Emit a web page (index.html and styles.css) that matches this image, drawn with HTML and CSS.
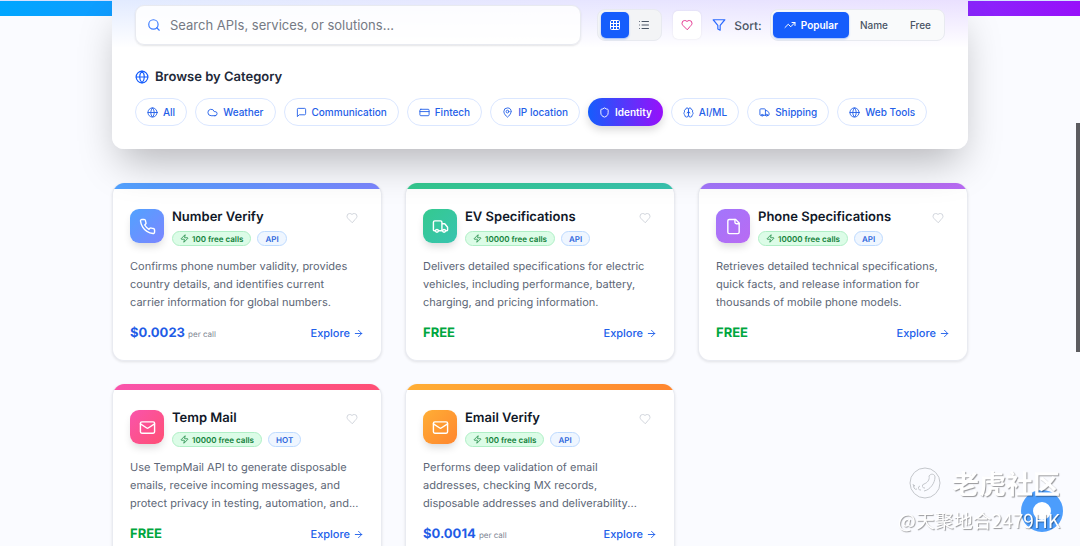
FILE: index.html
```html
<!DOCTYPE html>
<html lang="en">
<head>
    <meta charset="UTF-8">
    <meta name="viewport" content="width=device-width, initial-scale=1.0">
    <title>API Marketplace</title>
    <link rel="stylesheet" href="styles.css">
</head>
<body>
    <!-- Shared icons -->
    <svg class="sprite" aria-hidden="true">
        <symbol id="globe" viewBox="0 0 24 24"><circle cx="12" cy="12" r="10"/><path d="M12 2a14.5 14.5 0 0 0 0 20 14.5 14.5 0 0 0 0-20M2 12h20"/></symbol>
        <symbol id="search" viewBox="0 0 24 24"><circle cx="11" cy="11" r="8"/><path d="m21 21-4.3-4.3"/></symbol>
        <symbol id="grid" viewBox="0 0 24 24"><rect x="3" y="3" width="18" height="18" rx="2"/><path d="M3 9h18M3 15h18M9 3v18M15 3v18"/></symbol>
        <symbol id="list" viewBox="0 0 24 24"><path d="M3 5h.01M3 12h.01M3 19h.01M8 5h13M8 12h13M8 19h13"/></symbol>
        <symbol id="heart" viewBox="0 0 24 24"><path d="M19 14c1.49-1.46 3-3.21 3-5.5A5.5 5.5 0 0 0 16.500 3c-1.760 0-3 .5-4.500 2-1.500-1.500-2.740-2-4.500-2A5.500 5.500 0 0 0 2 8.500c0 2.300 1.500 4.050 3 5.500l7 7Z"/></symbol>
        <symbol id="filter" viewBox="0 0 24 24"><path d="M22 3H2l8 9.460V19l4 2v-8.540z"/></symbol>
        <symbol id="trending" viewBox="0 0 24 24"><path d="m22 7-8.500 8.500-5-5L2 17"/><path d="M16 7h6v6"/></symbol>
        <symbol id="cloud" viewBox="0 0 24 24"><path d="M17.500 19H9a7 7 0 1 1 6.710-9h1.790a4.500 4.500 0 1 1 0 9Z"/></symbol>
        <symbol id="message" viewBox="0 0 24 24"><path d="M21 15a2 2 0 0 1-2 2H7l-4 4V5a2 2 0 0 1 2-2h14a2 2 0 0 1 2 2z"/></symbol>
        <symbol id="credit" viewBox="0 0 24 24"><rect x="2" y="5" width="20" height="14" rx="2"/><path d="M2 10h20"/></symbol>
        <symbol id="pin" viewBox="0 0 24 24"><path d="M20 10c0 5-5.540 10.200-7.400 11.800a1 1 0 0 1-1.200 0C9.540 20.200 4 15 4 10a8 8 0 0 1 16 0"/><circle cx="12" cy="10" r="3"/></symbol>
        <symbol id="shield" viewBox="0 0 24 24"><path d="M20 13c0 5-3.500 7.500-7.660 8.950a1 1 0 0 1-.67-.01C7.500 20.500 4 18 4 13V6a1 1 0 0 1 1-1c2 0 4.500-1.200 6.240-2.720a1.170 1.170 0 0 1 1.520 0C14.510 3.810 17 5 19 5a1 1 0 0 1 1 1z"/></symbol>
        <symbol id="brain" viewBox="0 0 24 24"><path d="M12 5a3 3 0 1 0-5.997.125 4 4 0 0 0-2.526 5.770 4 4 0 0 0 .556 6.588A4 4 0 1 0 12 18Z"/><path d="M12 5a3 3 0 1 1 5.997.125 4 4 0 0 1 2.526 5.770 4 4 0 0 1-.556 6.588A4 4 0 1 1 12 18Z"/><path d="M15 13a4.500 4.500 0 0 1-3-4 4.500 4.500 0 0 1-3 4"/></symbol>
        <symbol id="truck" viewBox="0 0 24 24"><path d="M14 18V6a2 2 0 0 0-2-2H4a2 2 0 0 0-2 2v11a1 1 0 0 0 1 1h2M15 18H9M19 18h2a1 1 0 0 0 1-1v-3.650a1 1 0 0 0-.22-.624l-3.480-4.350A1 1 0 0 0 17.520 8H14"/><circle cx="17" cy="18" r="2"/><circle cx="7" cy="18" r="2"/></symbol>
        <symbol id="phone" viewBox="0 0 24 24"><path d="M22 16.920v3a2 2 0 0 1-2.180 2 19.790 19.790 0 0 1-8.630-3.070 19.500 19.500 0 0 1-6-6 19.790 19.790 0 0 1-3.070-8.670A2 2 0 0 1 4.110 2h3a2 2 0 0 1 2 1.720 12.840 12.840 0 0 0 .7 2.810 2 2 0 0 1-.45 2.110L8.090 9.910a16 16 0 0 0 6 6l1.270-1.270a2 2 0 0 1 2.110-.45 12.840 12.840 0 0 0 2.810.7A2 2 0 0 1 22 16.920z"/></symbol>
        <symbol id="file" viewBox="0 0 24 24"><path d="M15 2H6a2 2 0 0 0-2 2v16a2 2 0 0 0 2 2h12a2 2 0 0 0 2-2V7Z"/><path d="M14 2v4a2 2 0 0 0 2 2h4"/></symbol>
        <symbol id="mail" viewBox="0 0 24 24"><rect x="2" y="4" width="20" height="16" rx="2"/><path d="m22 7-8.970 5.700a1.940 1.940 0 0 1-2.060 0L2 7"/></symbol>
        <symbol id="zap" viewBox="0 0 24 24"><path d="M4 14a1 1 0 0 1-.78-1.630l9.900-10.200a.5.5 0 0 1 .86.460l-1.920 6.020A1 1 0 0 0 13 10h7a1 1 0 0 1 .78 1.630l-9.900 10.200a.5.5 0 0 1-.86-.460l1.920-6.020A1 1 0 0 0 11 14z"/></symbol>
        <symbol id="arrow" viewBox="0 0 24 24"><path d="M5 12h14M12 5l7 7-7 7"/></symbol>
    </svg>

    <header class="hero"></header>

    <main class="container">
        <!-- Search and filters -->
        <section class="panel">
            <div class="toolbar">
                <label class="search">
                    <svg class="icon"><use href="#search"/></svg>
                    <input type="text" placeholder="Search APIs, services, or solutions..." aria-label="Search APIs">
                </label>
                <div class="view-toggle">
                    <button class="active" aria-label="Grid view"><svg class="icon"><use href="#grid"/></svg></button>
                    <button aria-label="List view"><svg class="icon"><use href="#list"/></svg></button>
                </div>
                <button class="favorites" aria-label="Favorites"><svg class="icon"><use href="#heart"/></svg></button>
                <span class="sort-label"><svg class="icon"><use href="#filter"/></svg>Sort:</span>
                <div class="sort">
                    <button class="active"><svg class="icon"><use href="#trending"/></svg>Popular</button>
                    <button>Name</button>
                    <button>Free</button>
                </div>
            </div>

            <h2><svg class="icon"><use href="#globe"/></svg>Browse by Category</h2>
            <div class="categories">
                <button><svg class="icon"><use href="#globe"/></svg>All</button>
                <button><svg class="icon"><use href="#cloud"/></svg>Weather</button>
                <button><svg class="icon"><use href="#message"/></svg>Communication</button>
                <button><svg class="icon"><use href="#credit"/></svg>Fintech</button>
                <button><svg class="icon"><use href="#pin"/></svg>IP location</button>
                <button class="active"><svg class="icon"><use href="#shield"/></svg>Identity</button>
                <button><svg class="icon"><use href="#brain"/></svg>AI/ML</button>
                <button><svg class="icon"><use href="#truck"/></svg>Shipping</button>
                <button><svg class="icon"><use href="#globe"/></svg>Web Tools</button>
            </div>
        </section>

        <!-- API cards -->
        <section class="cards">
            <article class="card blue">
                <div class="card-head">
                    <div class="card-icon"><svg class="icon"><use href="#phone"/></svg></div>
                    <div class="card-title">
                        <h3>Number Verify</h3>
                        <div class="badges">
                            <span class="badge free"><svg class="icon"><use href="#zap"/></svg>100 free calls</span>
                            <span class="badge">API</span>
                        </div>
                    </div>
                    <button class="like" aria-label="Add to favorites"><svg class="icon"><use href="#heart"/></svg></button>
                </div>
                <p>Confirms phone number validity, provides country details, and identifies current carrier information for global numbers.</p>
                <div class="card-foot">
                    <div class="price">$0.0023 <small>per call</small></div>
                    <a href="#">Explore<svg class="icon"><use href="#arrow"/></svg></a>
                </div>
            </article>

            <article class="card green">
                <div class="card-head">
                    <div class="card-icon"><svg class="icon"><use href="#truck"/></svg></div>
                    <div class="card-title">
                        <h3>EV Specifications</h3>
                        <div class="badges">
                            <span class="badge free"><svg class="icon"><use href="#zap"/></svg>10000 free calls</span>
                            <span class="badge">API</span>
                        </div>
                    </div>
                    <button class="like" aria-label="Add to favorites"><svg class="icon"><use href="#heart"/></svg></button>
                </div>
                <p>Delivers detailed specifications for electric vehicles, including performance, battery, charging, and pricing information.</p>
                <div class="card-foot">
                    <div class="price no-cost">FREE</div>
                    <a href="#">Explore<svg class="icon"><use href="#arrow"/></svg></a>
                </div>
            </article>

            <article class="card purple">
                <div class="card-head">
                    <div class="card-icon"><svg class="icon"><use href="#file"/></svg></div>
                    <div class="card-title">
                        <h3>Phone Specifications</h3>
                        <div class="badges">
                            <span class="badge free"><svg class="icon"><use href="#zap"/></svg>10000 free calls</span>
                            <span class="badge">API</span>
                        </div>
                    </div>
                    <button class="like" aria-label="Add to favorites"><svg class="icon"><use href="#heart"/></svg></button>
                </div>
                <p>Retrieves detailed technical specifications, quick facts, and release information for thousands of mobile phone models.</p>
                <div class="card-foot">
                    <div class="price no-cost">FREE</div>
                    <a href="#">Explore<svg class="icon"><use href="#arrow"/></svg></a>
                </div>
            </article>

            <article class="card pink">
                <div class="card-head">
                    <div class="card-icon"><svg class="icon"><use href="#mail"/></svg></div>
                    <div class="card-title">
                        <h3>Temp Mail</h3>
                        <div class="badges">
                            <span class="badge free"><svg class="icon"><use href="#zap"/></svg>10000 free calls</span>
                            <span class="badge">HOT</span>
                        </div>
                    </div>
                    <button class="like" aria-label="Add to favorites"><svg class="icon"><use href="#heart"/></svg></button>
                </div>
                <p>Use TempMail API to generate disposable emails, receive incoming messages, and protect privacy in testing, automation, and...</p>
                <div class="card-foot">
                    <div class="price no-cost">FREE</div>
                    <a href="#">Explore<svg class="icon"><use href="#arrow"/></svg></a>
                </div>
            </article>

            <article class="card orange">
                <div class="card-head">
                    <div class="card-icon"><svg class="icon"><use href="#mail"/></svg></div>
                    <div class="card-title">
                        <h3>Email Verify</h3>
                        <div class="badges">
                            <span class="badge free"><svg class="icon"><use href="#zap"/></svg>100 free calls</span>
                            <span class="badge">API</span>
                        </div>
                    </div>
                    <button class="like" aria-label="Add to favorites"><svg class="icon"><use href="#heart"/></svg></button>
                </div>
                <p>Performs deep validation of email addresses, checking MX records, disposable addresses and deliverability...</p>
                <div class="card-foot">
                    <div class="price">$0.0014 <small>per call</small></div>
                    <a href="#">Explore<svg class="icon"><use href="#arrow"/></svg></a>
                </div>
            </article>
        </section>
    </main>

    <button class="chat" aria-label="Open chat"></button>
    <div class="scroll-thumb"></div>

    <div class="watermark">
        <div class="brand">
            <svg viewBox="0 0 32 32"><circle cx="16" cy="16" r="15"/><path d="M20 9c2-3 6-2 6 1 0 6-5 13-11 14M20 9c1 4-2 7-5 8M15 17a2 2 0 1 0 1 4M11 19a2 2 0 1 0 1 4M6 18a2 2 0 1 0 2 4M4 17l1 3"/></svg>
            老虎社区
        </div>
        <div class="author">@天聚地合2479HK</div>
    </div>
</body>
</html>
```
FILE: styles.css
```css
* {
    margin: 0;
    padding: 0;
    box-sizing: border-box;
}

body {
    font-family: Inter, "Noto Sans CJK SC", sans-serif;
    text-rendering: geometricPrecision;
    background-color: #fafbff;
    color: #1e2939;
    height: 100vh;
    overflow: hidden;
}

button {
    font-family: inherit;
    border: none;
    background: none;
    cursor: pointer;
}

.sprite {
    display: none;
}

.icon {
    width: 12px;
    height: 12px;
    flex-shrink: 0;
    fill: none;
    stroke: currentColor;
    stroke-width: 2;
    stroke-linecap: round;
    stroke-linejoin: round;
}

.hero {
    height: 16px;
    margin-bottom: -16px;
    background: linear-gradient(90deg, #00a6ff, #4f78ff 50%, #9810fa);
    border-top: 1px solid #d5e2ff;
}

.container {
    max-width: 856px;
    margin: 0 auto;
}

/* Search panel */
.panel {
    position: relative;
    padding: 5px 23px 23px;
    border-radius: 0 0 12px 12px;
    background: linear-gradient(180deg, rgba(255, 255, 255, 0), #fff 48px), linear-gradient(90deg, #e2ebff, #eae0ff);
    box-shadow: 0 20px 40px -8px rgba(0, 0, 0, 0.28);
}

.toolbar {
    display: flex;
    align-items: center;
}

.search {
    flex: 1;
    display: flex;
    align-items: center;
    gap: 9px;
    height: 40px;
    padding: 0 11px;
    border: 1px solid #e8eaf0;
    border-radius: 9px;
    background: rgba(255, 255, 255, 0.85);
    box-shadow: 0 1px 2px rgba(0, 0, 0, 0.1);
    color: #3b7bff;
}

.search .icon {
    width: 14px;
    height: 14px;
}

.search input {
    flex: 1;
    border: none;
    outline: none;
    background: none;
    font-family: inherit;
    font-size: 13px;
}

.search input::placeholder {
    color: #757a84;
}

.view-toggle,
.sort {
    display: flex;
    height: 32px;
    padding: 2px;
    border: 1px solid #e8eaf0;
    border-radius: 8px;
    background: #f3f4f6;
}

.view-toggle {
    gap: 1px;
    margin-left: 16px;
    padding: 2px 3px;
}

.view-toggle button,
.sort button {
    display: flex;
    align-items: center;
    justify-content: center;
    gap: 5px;
    border-radius: 5px;
    color: #4a5565;
}

.view-toggle button {
    width: 28px;
}

.view-toggle .active,
.sort .active {
    background: #155dfc;
    color: #fff;
    box-shadow: 0 1px 2px rgba(21, 93, 252, 0.4);
}

.favorites {
    display: flex;
    align-items: center;
    justify-content: center;
    width: 28px;
    height: 28px;
    margin-left: 11px;
    border-radius: 5px;
    background: #fff;
    box-shadow: 0 0 2px rgba(0, 0, 0, 0.1);
    color: #e63b94;
}

.sort-label {
    display: flex;
    align-items: center;
    gap: 8px;
    margin: 0 8px 0 11px;
    font-size: 12px;
    font-weight: 500;
    color: #4a5565;
}

.sort-label .icon {
    width: 14px;
    height: 14px;
    color: #2b6bff;
}

.sort {
    background: #f9fafb;
}

.sort button {
    padding: 0 11px;
    font-size: 10px;
    font-weight: 500;
}

.sort .active {
    font-weight: 600;
}

.panel h2 {
    display: flex;
    align-items: center;
    gap: 6px;
    margin: 24px 0 13px;
    font-size: 13px;
    line-height: 16px;
    font-weight: 600;
}

.panel h2 .icon {
    width: 14px;
    height: 14px;
    color: #155dfc;
}

.categories {
    display: flex;
    gap: 8px;
}

.categories button {
    display: flex;
    align-items: center;
    gap: 5px;
    height: 28px;
    padding: 0 11px;
    border: 1px solid #dbe7ff;
    border-radius: 14px;
    background: #fff;
    font-size: 10px;
    font-weight: 500;
    white-space: nowrap;
    color: #2460e8;
}

.categories .icon {
    width: 11px;
    height: 11px;
}

.categories .active {
    border: none;
    background: linear-gradient(90deg, #155dfc, #9810fa);
    box-shadow: 0 4px 8px rgba(0, 0, 0, 0.15);
    color: #fff;
    font-weight: 600;
}

/* API cards */
.cards {
    display: grid;
    grid-template-columns: repeat(3, 1fr);
    gap: 23px;
    margin-top: 34px;
}

.card {
    --from: #51a2ff;
    --to: #7c86ff;
    padding: 0 17px 17px;
    border: 1px solid #e9ebf1;
    border-top: none;
    border-radius: 12px;
    background: #fff;
    box-shadow: 0 1px 3px rgba(0, 0, 0, 0.1);
    overflow: hidden;
}

.card::before {
    content: "";
    display: block;
    height: 6px;
    margin: 0 -18px 20px;
    background: linear-gradient(90deg, var(--from), var(--to));
}

.green {
    --from: #34c98f;
    --to: #39c4b0;
}

.purple {
    --from: #a276fb;
    --to: #b96bf3;
}

.pink {
    --from: #f954ac;
    --to: #ff4f74;
}

.orange {
    --from: #ffae35;
    --to: #ff862f;
}

.card-head {
    display: flex;
    align-items: flex-start;
    gap: 8px;
}

.card-icon {
    display: flex;
    align-items: center;
    justify-content: center;
    width: 34px;
    height: 34px;
    border-radius: 9px;
    background: linear-gradient(135deg, var(--from), var(--to));
    box-shadow: 0 5px 8px -2px rgba(0, 0, 0, 0.16);
    color: #fff;
}

.card-icon .icon {
    width: 17px;
    height: 17px;
}

.card-title {
    flex: 1;
}

.card h3 {
    font-size: 13px;
    line-height: 16px;
    font-weight: 600;
    color: #101828;
}

.badges {
    display: flex;
    gap: 6px;
    margin-top: 6px;
}

.badge {
    display: flex;
    align-items: center;
    gap: 3px;
    height: 15px;
    padding: 0 7px;
    border: 1px solid #bedbff;
    border-radius: 8px;
    background: #eff6ff;
    font-size: 8px;
    font-weight: 600;
    color: #2b64dc;
}

.badge.free {
    border-color: #b0efc6;
    background: #dcfce7;
    color: #12813a;
}

.badge .icon {
    width: 9px;
    height: 9px;
}

.like {
    display: flex;
    margin: 3px 6px 0 0;
    color: #d1d5dc;
}

.card p {
    margin-top: 11px;
    padding-right: 4px;
    font-size: 11px;
    line-height: 18px;
    color: #5c6676;
}

.card-foot {
    display: flex;
    align-items: center;
    justify-content: space-between;
    margin-top: 12px;
    height: 20px;
}

.price {
    font-size: 13px;
    font-weight: 700;
    color: #1f5ce6;
}

.price small {
    font-size: 8px;
    font-weight: 400;
    color: #7d8592;
}

.price.no-cost {
    color: #00a63e;
}

.card-foot a {
    display: flex;
    align-items: center;
    gap: 3px;
    font-size: 11px;
    font-weight: 500;
    color: #2160ea;
    text-decoration: none;
}

.card-foot .icon {
    width: 11px;
    height: 11px;
}

/* Floating items */
.chat {
    position: fixed;
    right: 17px;
    bottom: 14px;
    width: 42px;
    height: 42px;
    border: 12px solid #4c9dfc;
    border-radius: 50%;
    background: #fff;
}

.scroll-thumb {
    position: fixed;
    top: 123px;
    right: 0;
    width: 4px;
    height: 229px;
    background: #5c5c60;
}

.watermark {
    position: fixed;
    right: 20px;
    bottom: 12px;
    text-align: right;
    color: #fff;
    text-shadow: 1px 1px 1px rgba(0, 0, 0, 0.4);
    font-family: "Noto Sans CJK SC", sans-serif;
}

.brand {
    display: flex;
    align-items: center;
    justify-content: flex-end;
    gap: 11px;
    font-size: 27px;
    line-height: 38px;
    font-weight: 700;
}

.brand svg {
    width: 32px;
    height: 32px;
    fill: none;
    stroke: #c3c6cb;
    stroke-width: 1;
}

.author {
    font-size: 19px;
    line-height: 26px;
    margin-top: 6px;
}
```
